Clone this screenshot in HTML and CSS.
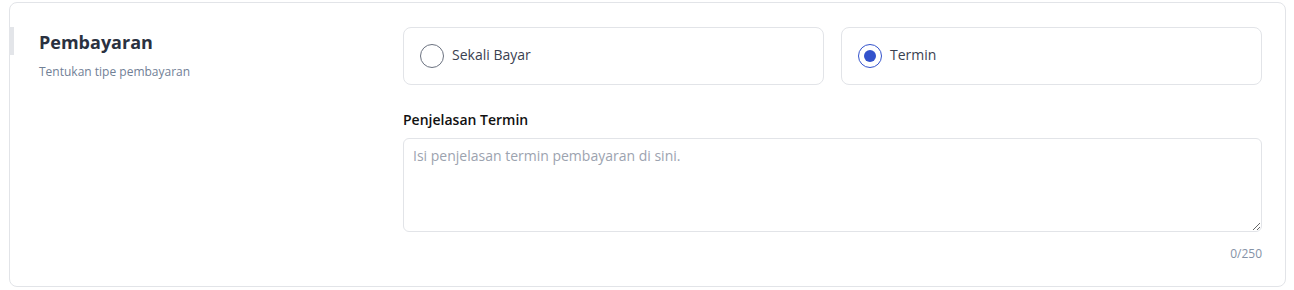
FILE: index.html
```html
<!DOCTYPE html>
<html lang="id">
<head>
    <meta charset="UTF-8">
    <meta name="viewport" content="width=device-width, initial-scale=1.0">
    <title>Pembayaran</title>
    <link rel="stylesheet" href="styles.css">
</head>
<body>
    <section class="card">
        <div class="card-info">
            <h2>Pembayaran</h2>
            <p>Tentukan tipe pembayaran</p>
        </div>

        <div class="card-body">
            <div class="options">
                <label class="option">
                    <input type="radio" name="payment" value="once">
                    <span class="radio"></span>
                    <span class="option-text">Sekali Bayar</span>
                </label>
                <label class="option">
                    <input type="radio" name="payment" value="term" checked>
                    <span class="radio"></span>
                    <span class="option-text">Termin</span>
                </label>
            </div>

            <div class="field">
                <label class="field-label" for="termNote">Penjelasan Termin</label>
                <textarea id="termNote" class="field-textarea" maxlength="250" placeholder="Isi penjelasan termin pembayaran di sini."></textarea>
                <div class="field-count" id="termCount">0/250</div>
            </div>
        </div>
    </section>

    <script>
        const termNote = document.getElementById('termNote');
        const termCount = document.getElementById('termCount');

        termNote.addEventListener('input', () => {
            termCount.textContent = `${termNote.value.length}/250`;
        });
    </script>
</body>
</html>
```

FILE: styles.css
```css
:root {
    --primary: #3352cc;
    --text: #1f2937;
    --text-muted: #718096;
    --border: #e2e4e8;
    --placeholder: #9ca3af;
}

* {
    box-sizing: border-box;
    margin: 0;
    padding: 0;
}

body {
    font-family: 'Open Sans', 'Noto Sans', sans-serif;
    color: var(--text);
    background: white;
    padding: 2px 8px 0 9px;
}

.card {
    position: relative;
    display: grid;
    grid-template-columns: 364px 1fr;
    border: 1px solid var(--border);
    border-radius: 8px;
    padding: 24px 23px 24px 29px;
}

.card::before {
    content: '';
    position: absolute;
    left: -1px;
    top: 24px;
    width: 5px;
    height: 28px;
    background: #e3e5e9;
}

.card-info h2 {
    font-size: 18px;
    font-weight: 700;
    line-height: 26px;
    margin-top: 2px;
    color: #2a3140;
}

.card-info p {
    font-size: 12px;
    line-height: 16px;
    margin-top: 9px;
    color: var(--text-muted);
}

.options {
    display: grid;
    grid-template-columns: 1fr 1fr;
    gap: 17px;
}

.option {
    display: flex;
    align-items: center;
    gap: 8px;
    height: 58px;
    padding: 0 16px;
    border: 1px solid var(--border);
    border-radius: 8px;
    cursor: pointer;
}

.option input {
    display: none;
}

.radio {
    width: 24px;
    height: 24px;
    border: 1px solid #6b7280;
    border-radius: 50%;
    display: flex;
    align-items: center;
    justify-content: center;
    flex-shrink: 0;
}

.option input:checked + .radio {
    border-color: var(--primary);
}

.option input:checked + .radio::after {
    content: '';
    width: 12px;
    height: 12px;
    border-radius: 50%;
    background: var(--primary);
}

.option-text {
    font-size: 14px;
    color: #3a4150;
    margin-top: -4px;
}

.field {
    margin-top: 25px;
}

.field-label {
    display: block;
    font-size: 14px;
    font-weight: 600;
    line-height: 20px;
    color: #111;
}

.field-textarea {
    display: block;
    width: 100%;
    height: 94px;
    margin-top: 8px;
    padding: 7px 9px;
    border: 1px solid var(--border);
    border-radius: 6px;
    font-family: inherit;
    font-size: 14px;
    line-height: 20px;
    color: var(--text);
    resize: vertical;
    outline: none;
}

.field-textarea::placeholder {
    color: var(--placeholder);
}

.field-count {
    text-align: right;
    font-size: 12px;
    line-height: 16px;
    margin-top: 14px;
    color: #8592a6;
}
```
